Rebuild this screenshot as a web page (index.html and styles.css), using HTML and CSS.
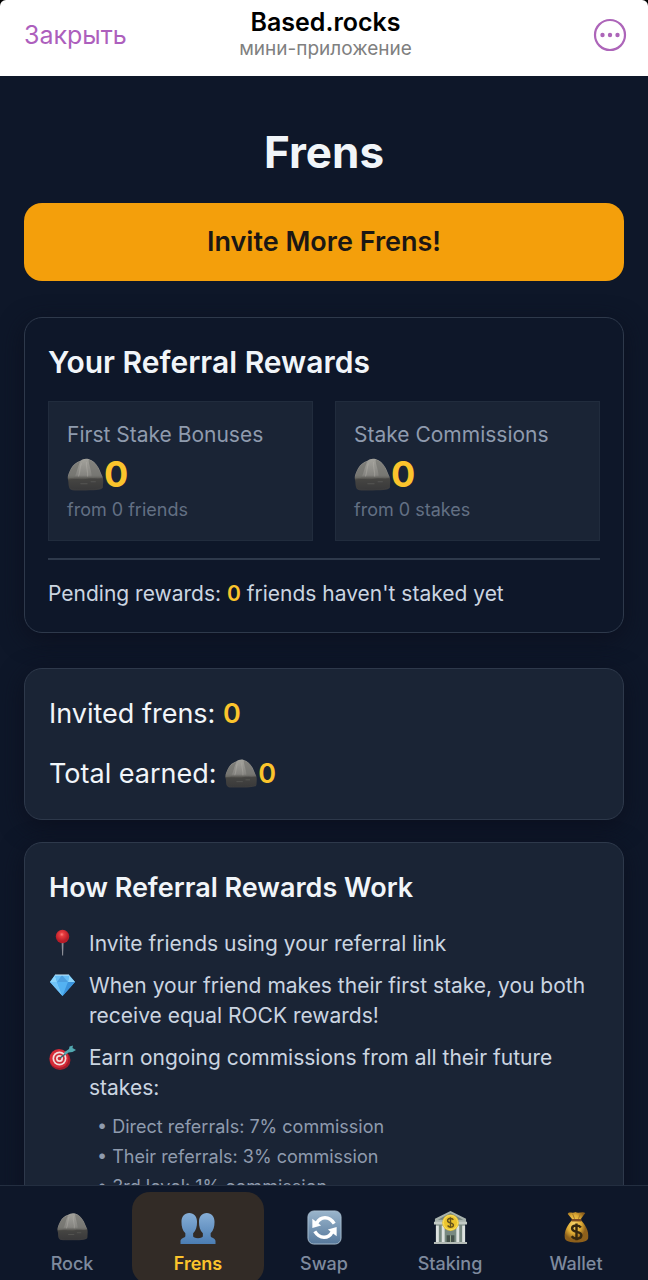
FILE: index.html
```html
<!DOCTYPE html>
<html lang="en">
<head>
<meta charset="utf-8">
<meta name="viewport" content="width=device-width, initial-scale=1">
<title>Based.rocks</title>
<link rel="stylesheet" href="styles.css">
</head>
<body>
<svg class="defs" width="0" height="0" aria-hidden="true">
  <defs>
    <linearGradient id="stone" x1="0" y1="0" x2="0" y2="1">
      <stop offset="0" stop-color="#a3a29c"/><stop offset=".52" stop-color="#858480"/><stop offset=".64" stop-color="#504f4b"/><stop offset="1" stop-color="#3a3a3c"/>
    </linearGradient>
    <symbol id="rock" viewBox="0 0 36 32">
      <path d="M3 30C1 28 2 24 1 21C0 18 2 14 4 10C6 6 9 4 13 2.500C15 1 18 0 21 1C25 2 28 5 31 10L34 17C36 20 35 25 35 28C35 31 30 31.500 18 31.500C9 31.500 4 32 3 30Z" fill="url(#stone)"/>
      <path d="M13 3C10 9 10 14 7 19L1 20C2 13 5 6 13 3Z" fill="#6f6f6a" opacity=".65"/>
      <path d="M21 1.500C21 7 24 11 24 19L34 18L30 9C28 5 25 3 21 1.500Z" fill="#6c6c67" opacity=".55"/>
      <path d="M14 5C12 10 13 14 11 18M19 4C18 9 21 13 20 18" fill="none" stroke="#bab8b1" stroke-width="1.200" opacity=".35"/>
      <path d="M1 21C10 19 15 22 21 20C26 19 30 21 35 19V28C29 31 8 31 2 29Z" fill="#383836" opacity=".4"/>
      <path d="M13 25H20M23 23H28" fill="none" stroke="#6c6b67" opacity=".5"/>
    </symbol>
    <radialGradient id="red" cx=".45" cy=".35"><stop offset="0" stop-color="#ff8580"/><stop offset=".3" stop-color="#e83d40"/><stop offset="1" stop-color="#b71c27"/></radialGradient>
    <linearGradient id="people" x1="0" y1="0" x2="0" y2="1"><stop offset="0" stop-color="#86aed6"/><stop offset="1" stop-color="#4b7db3"/></linearGradient>
    <linearGradient id="tile" x1="0" y1="0" x2="0" y2="1"><stop offset="0" stop-color="#9ab5cc"/><stop offset="1" stop-color="#56789b"/></linearGradient>
    <radialGradient id="gold" cx=".4" cy=".4"><stop offset="0" stop-color="#f8d46a"/><stop offset=".6" stop-color="#dfac35"/><stop offset="1" stop-color="#8e601b"/></radialGradient>
  </defs>
</svg>

<header class="topbar">
  <button class="close" type="button">Закрыть</button>
  <div class="app">
    <div class="app-name">Based.rocks</div>
    <div class="app-kind">мини-приложение</div>
  </div>
  <button class="more" type="button" aria-label="More">
    <svg width="34" height="34" viewBox="0 0 34 34"><circle cx="17" cy="17" r="15" fill="none" stroke="currentColor" stroke-width="2.2"/><g fill="currentColor"><circle cx="9.5" cy="17" r="2.2"/><circle cx="17" cy="17" r="2.2"/><circle cx="24.500" cy="17" r="2.2"/></g></svg>
  </button>
</header>

<main class="page">
  <h1 class="title">Frens</h1>
  <button class="invite" type="button">Invite More Frens!</button>

  <section class="card rewards">
    <h2 class="heading">Your Referral Rewards</h2>
    <div class="tiles">
      <div class="tile">
        <div class="tile-label">First Stake Bonuses</div>
        <div class="tile-value"><svg class="rock-lg"><use href="#rock"/></svg>0</div>
        <div class="tile-note">from 0 friends</div>
      </div>
      <div class="tile">
        <div class="tile-label">Stake Commissions</div>
        <div class="tile-value"><svg class="rock-lg"><use href="#rock"/></svg>0</div>
        <div class="tile-note">from 0 stakes</div>
      </div>
    </div>
    <p class="pending">Pending rewards: <b class="num">0</b> friends haven't staked yet</p>
  </section>

  <section class="card panel totals">
    <p class="total">Invited frens: <b class="num">0</b></p>
    <p class="total">Total earned: <svg class="rock-md"><use href="#rock"/></svg><b class="num">0</b></p>
  </section>

  <section class="card panel how">
    <h2 class="heading how-heading">How Referral Rewards Work</h2>
    <ul class="steps">
      <li class="step">
        <svg class="step-icon" viewBox="0 0 28 28"><path d="M12.600 12H14.600L14.100 26.500H13.100Z" fill="#8d8f98"/><circle cx="13.500" cy="7.500" r="6.700" fill="url(#red)"/></svg>
        <span>Invite friends using your referral link</span>
      </li>
      <li class="step">
        <svg class="step-icon" viewBox="0 0 28 28"><path d="M6 4H20L26 11L13.500 25L1 11Z" fill="#4aa9ed"/><path d="M6 4L1 11H8ZM20 4L26 11H19Z" fill="#8dd5fb"/><path d="M6 4H20L19 11H8Z" fill="#65bdf5"/><path d="M13 4L8 11H19Z" fill="#4c9fe0"/><path d="M1 11H8L13.500 25Z" fill="#72c4f7"/><path d="M8 11H19L13.500 25Z" fill="#54b2f2"/><path d="M19 11H26L13.500 25Z" fill="#3b93dc"/><path d="M6 4H20" stroke="#c5eaff" stroke-width="1"/></svg>
        <span>When your friend makes their first stake, you both receive equal ROCK rewards!</span>
      </li>
      <li class="step">
        <svg class="step-icon" viewBox="0 0 28 28"><ellipse cx="11" cy="17" rx="10.500" ry="10" fill="#a51d2b"/><circle cx="10" cy="15.500" r="9.500" fill="#d52b38"/><circle cx="10.500" cy="15.500" r="7" fill="#f2dddc"/><circle cx="10.500" cy="15.500" r="5.300" fill="#cf2c37"/><circle cx="10.500" cy="15.500" r="3.500" fill="#f2dddc"/><circle cx="10.500" cy="15.500" r="1.800" fill="#cf2c37"/><path d="M11 15L19 9" stroke="#2c6770" stroke-width="1.500"/><path d="M15 9.500L20 6L20.500 3.500L24 2.500L23.500 5L27 7L23.500 9L19.500 9.500L16 12Z" fill="#52a9b1"/></svg>
        <span>Earn ongoing commissions from all their future stakes:</span>
      </li>
    </ul>
    <ul class="levels">
      <li>• Direct referrals: 7% commission</li>
      <li>• Their referrals: 3% commission</li>
      <li>• 3rd level: 1% commission</li>
    </ul>
  </section>
</main>

<nav class="tabs">
  <a class="tab" href="#rock-tab"><svg class="tab-icon" viewBox="-2 -3 40 40"><use href="#rock" width="36" height="32"/></svg>Rock</a>
  <a class="tab active" href="#frens-tab" aria-current="page"><svg class="tab-icon wide" viewBox="0 0 40 36"><g fill="url(#people)"><path d="M11 3C6 3 3 7 3 12C3 17 4 21 7 24V27C6 29 2 29 2 32V35H20V29C17 29 15 28 15 27V24C18 21 19 17 19 12C19 7 16 3 11 3Z"/><path d="M29 3C34 3 37 7 37 12C37 17 36 21 33 24V27C34 29 38 29 38 32V35H20V29C23 29 25 28 25 27V24C22 21 21 17 21 12C21 7 24 3 29 3Z"/></g></svg>Frens</a>
  <a class="tab" href="#swap-tab"><svg class="tab-icon" viewBox="0 0 36 36"><rect x="1" y="1" width="34" height="34" rx="6" fill="url(#tile)" stroke="#a9bfd1"/><g fill="none" stroke="#fff" stroke-width="3.500"><path d="M10 13.500C14 6 23 6 28 14"/><path d="M26 22.500C22 30 13 30 8 22"/></g><path d="M5.500 9V18.500L14.500 16ZM30.500 27V17.500L21.500 20Z" fill="#fff"/></svg>Swap</a>
  <a class="tab" href="#staking-tab"><svg class="tab-icon" viewBox="0 0 36 36"><path d="M3 13H33V35H3Z" fill="#788980"/><path d="M18 1L34 9V13H2V9Z" fill="#a8b3ad"/><path d="M18 3L31 10H5Z" fill="#71807c"/><path d="M1 12H35V15H1Z" fill="#c3cbc5"/><path d="M14 26H22V34H14Z" fill="#46524b"/><path d="M18 26V34" stroke="#9aaa91"/><g fill="#dde2df"><rect x="3" y="16" width="3" height="18"/><rect x="9" y="16" width="3" height="18"/><rect x="24" y="16" width="3" height="18"/><rect x="30" y="16" width="3" height="18"/></g><path d="M1 34H35" stroke="#b4bbb6" stroke-width="2"/><circle cx="18" cy="13" r="8.500" fill="#edc52d"/><circle cx="18" cy="13" r="7.300" fill="none" stroke="#f8df65"/><path d="M21 10C19 8 15 8.500 15 11C15 14 21 12.500 21 15.500C21 18 17 18.500 15 16M18 7.500V18.500" fill="none" stroke="#65521b" stroke-width="1.500"/></svg>Staking</a>
  <a class="tab" href="#wallet-tab"><svg class="tab-icon" viewBox="0 0 36 36"><path d="M14 10L9 4C10 1 14 4 17 2C20 4 24 1 27 3L22 10C27 15 31 21 30 29C29 35 7 35 6 29C5 21 9 15 14 10Z" fill="url(#gold)"/><path d="M13 10.500H23" stroke="#7c4b21" stroke-width="2.500"/><path d="M14 4L16 9M22 4L20 9" stroke="#9e7528"/><path d="M22.500 18C20 14.500 13.500 15.500 13.500 19C13.500 23.500 23 21.500 23 26C23 30 16 31 13 27M18 14V31" fill="none" stroke="#34270f" stroke-width="2.500"/></svg>Wallet</a>
</nav>
</body>
</html>
```
FILE: styles.css
```css
* { box-sizing: border-box; }
html { background: #000; }
body {
  margin: 0;
  height: 100vh;
  display: flex;
  flex-direction: column;
  background: #000;
  color: #f1f5f9;
  font-family: Inter, "Liberation Sans", sans-serif;
}
h1, h2, p, ul { margin: 0; padding: 0; }
ul { list-style: none; }
button { border: 0; padding: 0; background: none; font: inherit; cursor: pointer; }
.defs { position: absolute; }

.topbar {
  flex: none;
  height: 76px;
  padding: 8px 21px 14px 24px;
  display: grid;
  grid-template-columns: 1fr auto 1fr;
  align-items: center;
  background: #fff;
  border-radius: 6px 6px 0 0;
}
.close { justify-self: start; color: #ad5fbd; font-size: 25px; line-height: 30px; }
.app { text-align: center; }
.app-name { color: #000; font-size: 25px; font-weight: 600; line-height: 28px; }
.app-kind { color: #808080; font-size: 19px; line-height: 26px; }
.more { justify-self: end; display: flex; color: #ad65b9; }

.page {
  flex: 1;
  min-height: 0;
  overflow-y: auto;
  scrollbar-width: none;
  padding: 49px 24px 24px;
  background: #0e1729;
}
.title { font-size: 44px; font-weight: 700; line-height: 54px; text-align: center; }
.invite {
  display: block;
  width: 100%;
  margin: 24px 0 36px;
  padding: 21px;
  border-radius: 18px;
  background: #f49f0b;
  color: #1b1714;
  font-size: 27px;
  font-weight: 600;
  line-height: 36px;
}
.card {
  border: 1px solid #2e394b;
  border-radius: 18px;
  padding: 24px;
  box-shadow: 0 6px 24px #0c101f;
}
.panel { background: #1a2435; }
.heading { font-size: 30px; font-weight: 600; line-height: 42px; }
.rewards { padding: 23px; margin-bottom: 35px; }
.tiles { display: grid; grid-template-columns: 1fr 1fr; gap: 22px; margin: 18px 0 17px; }
.tile { padding: 18px; border: 1px solid #212c3d; background: #1a2435; }
.tile-label { color: #8f9bae; font-size: 21px; line-height: 30px; }
.tile-value { display: flex; align-items: center; color: #fbc42c; font-size: 36px; font-weight: 700; line-height: 48px; }
.tile-note { color: #637084; font-size: 18px; line-height: 24px; }
.rock-lg { width: 37px; height: 33px; }
.rock-md { width: 34px; height: 29px; vertical-align: -5px; }
.pending { padding-top: 19px; border-top: 2px solid #2e394b; color: #cbd5e1; font-size: 21px; line-height: 30px; }
.num { color: #fbc42c; font-weight: 600; }
.totals { display: grid; gap: 18px; margin-bottom: 22px; }
.total { font-size: 27px; line-height: 42px; }
.how-heading { font-size: 27px; }
.steps { display: grid; gap: 12px; margin-top: 20px; color: #cbd5e1; font-size: 21px; line-height: 30px; }
.step { display: grid; grid-template-columns: 28px 1fr; gap: 12px; }
.step-icon { width: 28px; height: 28px; }
.levels { display: grid; gap: 6px; margin-top: 12px; padding-left: 48px; color: #8f9bae; font-size: 18px; line-height: 24px; }

.tabs {
  flex: none;
  height: 95px;
  overflow: hidden;
  display: grid;
  grid-template-columns: repeat(5, 1fr);
  padding: 6px 9px 0;
  border-top: 1px solid #232e40;
  background: #0e1729;
}
.tab {
  height: 92px;
  margin: 0 -3px;
  padding-top: 18px;
  display: flex;
  flex-direction: column;
  align-items: center;
  gap: 7px;
  border-radius: 18px;
  color: #7e8a9e;
  font-size: 18px;
  font-weight: 500;
  line-height: 24px;
  text-decoration: none;
}
.tab.active { background: #322b26; color: #fbc42c; font-weight: 600; }
.tab-icon { width: 35px; height: 35px; }
.tab-icon.wide { width: 40px; }
```
